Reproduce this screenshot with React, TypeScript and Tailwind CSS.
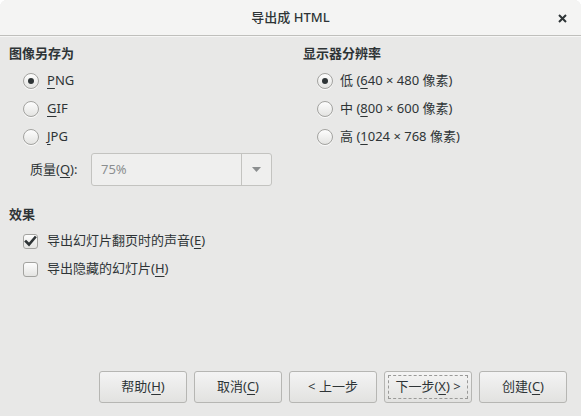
import React from 'react';

const font = { fontFamily: '"Noto Sans", "Noto Sans CJK SC", sans-serif' };

function Radio({ checked }: { checked?: boolean }) {
  return (
    <span className="flex h-[16px] w-[16px] shrink-0 items-center justify-center rounded-full border border-[#a3a3a0] bg-gradient-to-b from-[#fdfdfd] to-[#e4e4e2] shadow-[0_1px_0_rgba(255,255,255,0.8)]">
      {checked && <span className="h-[6px] w-[6px] rounded-full bg-[#2e3436]" />}
    </span>
  );
}

function Check({ checked }: { checked?: boolean }) {
  return (
    <span className="flex h-[15px] w-[15px] shrink-0 items-center justify-center rounded-[3px] border border-[#a3a3a0] bg-gradient-to-b from-[#fdfdfd] to-[#e4e4e2]">
      {checked && (
        <svg width="13" height="13" viewBox="0 0 13 13">
          <path d="M2 6.5 L5 9.5 L11 2.5" fill="none" stroke="#2e3436" strokeWidth="2.6" strokeLinecap="square" />
        </svg>
      )}
    </span>
  );
}

function Btn({ children, focus }: { children: React.ReactNode; focus?: boolean }) {
  return (
    <div className="flex h-[32px] w-[88px] items-center justify-center rounded-[3px] border border-[#b6b6b3] bg-gradient-to-b from-[#f4f4f4] to-[#e2e2e0] p-[3px] text-[13px] text-[#2e3436]">
      <div className={'flex h-full w-full items-center justify-center ' + (focus ? 'border border-dashed border-[#9a9a98]' : '')}>
        {children}
      </div>
    </div>
  );
}

const U = ({ children }: { children: React.ReactNode }) => (
  <span className="underline decoration-1 underline-offset-[3px]">{children}</span>
);

export default function App() {
  return (
    <div className="h-[416px] w-[581px] bg-white" style={font}>
      <div className="flex h-full w-full flex-col overflow-hidden rounded-t-[7px] bg-[#e8e8e7] text-[13px] text-[#2e3436]">
        {/* title bar */}
        <div className="relative flex h-[36px] shrink-0 items-center justify-center border-b border-[#bfbfbc] bg-[#f4f4f3] shadow-[0_1px_0_#f6f6f5]">
          <span className="text-[13px] font-medium">导出成 HTML</span>
          <svg className="absolute right-[14px] top-[14px]" width="9" height="9" viewBox="0 0 9 9">
            <path d="M1 1 L8 8 M8 1 L1 8" stroke="#2e3436" strokeWidth="2" />
          </svg>
        </div>

        <div className="flex pt-[9px]">
          {/* left column */}
          <div className="w-[303px] shrink-0 pl-[9px]">
            <div className="flex h-[18px] items-center font-bold">图像另存为</div>
            <div className="mt-[4px] pl-[14px]">
              {[
                ['P', 'NG', true],
                ['G', 'IF', false],
                ['J', 'PG', false],
              ].map(([a, b, c]) => (
                <div key={a as string} className="flex h-[28px] items-center gap-[8px]">
                  <Radio checked={c as boolean} />
                  <span>
                    <U>{a as string}</U>
                    {b as string}
                  </span>
                </div>
              ))}
            </div>
            <div className="mt-[2px] flex items-center">
              <span className="w-[82px] pl-[21px]">
                质量(<U>Q</U>):
              </span>
              <div className="flex h-[33px] w-[181px] rounded-[3px] border border-[#c3c3c0] bg-[#efefee]">
                <div className="flex flex-1 items-center pl-[9px] text-[#8b8e8f]">75%</div>
                <div className="flex w-[30px] items-center justify-center border-l border-[#c3c3c0]">
                  <svg width="9" height="5" viewBox="0 0 9 5">
                    <path d="M0 0 H9 L4.5 5 Z" fill="#8b8e8f" />
                  </svg>
                </div>
              </div>
            </div>
          </div>

          {/* right column */}
          <div className="flex-1">
            <div className="flex h-[18px] items-center font-bold">显示器分辨率</div>
            <div className="mt-[4px] pl-[14px]">
              {[
                ['低 (', '6', '40 × 480 像素)', true],
                ['中 (', '8', '00 × 600 像素)', false],
                ['高 (', '1', '024 × 768 像素)', false],
              ].map(([a, b, c, d]) => (
                <div key={b as string} className="flex h-[28px] items-center gap-[7px]">
                  <Radio checked={d as boolean} />
                  <span>
                    {a as string}
                    <U>{b as string}</U>
                    {c as string}
                  </span>
                </div>
              ))}
            </div>
          </div>
        </div>

        {/* effects */}
        <div className="mt-[20px] pl-[9px]">
          <div className="flex h-[18px] items-center font-bold">效果</div>
          <div className="mt-[3px] pl-[14px]">
            <div className="flex h-[28px] items-center gap-[9px]">
              <Check checked />
              <span>
                导出幻灯片翻页时的声音(<U>E</U>)
              </span>
            </div>
            <div className="flex h-[28px] items-center gap-[9px]">
              <Check />
              <span>
                导出隐藏的幻灯片(<U>H</U>)
              </span>
            </div>
          </div>
        </div>

        {/* buttons */}
        <div className="mt-auto flex justify-end gap-[7px] pb-[13px] pr-[14px]">
          <Btn>
            帮助(<U>H</U>)
          </Btn>
          <Btn>
            取消(<U>C</U>)
          </Btn>
          <Btn>&lt; 上一步</Btn>
          <Btn focus>
            下一步(<U>X</U>) &gt;
          </Btn>
          <Btn>
            创建(<U>C</U>)
          </Btn>
        </div>
      </div>
    </div>
  );
}
